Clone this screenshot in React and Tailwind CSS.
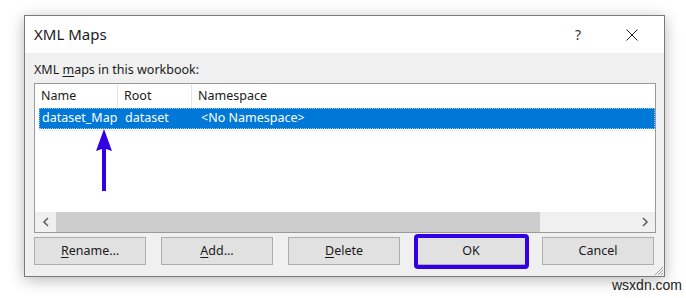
import React from "react";

const font = { fontFamily: '"Noto Sans", "Open Sans", sans-serif' };

function Btn({ children, className = "" }) {
  return (
    <button
      className={`relative h-[28px] w-[112px] border border-[#adadad] bg-[#e1e1e1] text-[12.5px] text-[#1a1a1a] ${className}`}
    >
      {children}
    </button>
  );
}

function Chevron({ dir }) {
  return (
    <svg width="8" height="10" viewBox="0 0 8 10">
      <path
        d={dir === "left" ? "M6 1 L2 5 L6 9" : "M2 1 L6 5 L2 9"}
        stroke="#606060"
        strokeWidth="1.6"
        fill="none"
      />
    </svg>
  );
}

export default function App() {
  return (
    <div className="relative h-[298px] w-[686px] overflow-hidden bg-white pl-[24px] pt-[15px]" style={font}>
      <div className="flex h-[262px] w-[641px] flex-col border border-[#7a7a7a] bg-[#f0f0f0] shadow-[0_3px_14px_rgba(0,0,0,0.28)]">
        {/* title bar */}
        <div className="flex h-[37px] items-center bg-white pl-[9px]">
          <span className="text-[15px] text-[#1a1a1a]">XML Maps</span>
          <span className="ml-auto mr-[45px] text-[14px] text-[#333]">?</span>
          <svg className="mr-[26px]" width="12" height="12" viewBox="0 0 12 12">
            <path d="M0.5 0.5 L11.5 11.5 M11.5 0.5 L0.5 11.5" stroke="#222" strokeWidth="1" />
          </svg>
        </div>

        {/* body */}
        <div className="relative flex flex-1 flex-col px-[9px] pt-[7px]">
          <div className="h-[20px] text-[12.5px] leading-[20px] text-[#1a1a1a]">
            XML <span className="underline underline-offset-2">m</span>aps in this workbook:
          </div>

          <div className="mt-[3px] flex h-[150px] w-[622px] flex-col border border-[#9a9a9a] bg-white">
            {/* header */}
            <div className="flex h-[24px] text-[12.5px] text-[#1a1a1a]">
              <div className="flex w-[83px] items-center border-r border-[#e5e5e5] pl-[6px]">Name</div>
              <div className="flex w-[74px] items-center border-r border-[#e5e5e5] pl-[6px]">Root</div>
              <div className="flex flex-1 items-center pl-[6px]">Namespace</div>
            </div>
            {/* selected row */}
            <div className="ml-[4px] flex h-[21px] items-center border border-dotted border-[#9bc7ef] bg-[#0078d7] text-[12.5px] text-white">
              <div className="w-[78px] pl-[2px]">dataset_Map</div>
              <div className="w-[75px] pl-[7px]">dataset</div>
              <div className="flex-1 pl-[8px]">&lt;No Namespace&gt;</div>
            </div>
            <div className="ml-[4px] h-[2px] border-b border-dotted border-[#e0e0e0]" />

            <div className="flex-1" />

            {/* horizontal scrollbar */}
            <div className="flex h-[20px] bg-[#f0f0f0]">
              <div className="flex w-[21px] items-center justify-center">
                <Chevron dir="left" />
              </div>
              <div className="w-[484px] bg-[#cdcdcd]" />
              <div className="flex-1" />
              <div className="flex w-[21px] items-center justify-center">
                <Chevron dir="right" />
              </div>
            </div>
          </div>

          {/* buttons */}
          <div className="mt-[4px] flex gap-[15px]">
            <Btn>
              <span className="underline underline-offset-2">R</span>ename…
            </Btn>
            <Btn>
              <span className="underline underline-offset-2">A</span>dd…
            </Btn>
            <Btn>
              <span className="underline underline-offset-2">D</span>elete
            </Btn>
            <Btn>
              OK
              <span className="absolute left-[-2px] top-[-4px] h-[35px] w-[115px] rounded-[4px] border-[4px] border-[#3300e6]" />
            </Btn>
            <Btn>Cancel</Btn>
          </div>

          {/* resize grip */}
          <svg className="absolute bottom-0 right-0" width="12" height="12" viewBox="0 0 12 12">
            <path d="M11 3 L3 11 M11 6 L6 11 M11 9 L9 11" stroke="#a0a0a0" strokeWidth="1" />
          </svg>

          {/* annotation arrow */}
          <svg className="absolute left-[70px] top-[76px]" width="18" height="63" viewBox="0 0 18 63">
            <path d="M9 0 L17 22 L11 20 L11 62 L7 62 L7 20 L1 22 Z" fill="#3300e6" />
          </svg>
        </div>
      </div>

      <div
        className="absolute left-[612px] top-[275px] text-[14px] text-[#222]"
        style={{ fontFamily: '"Liberation Sans", Arial, sans-serif' }}
      >
        wsxdn.com
      </div>
    </div>
  );
}
